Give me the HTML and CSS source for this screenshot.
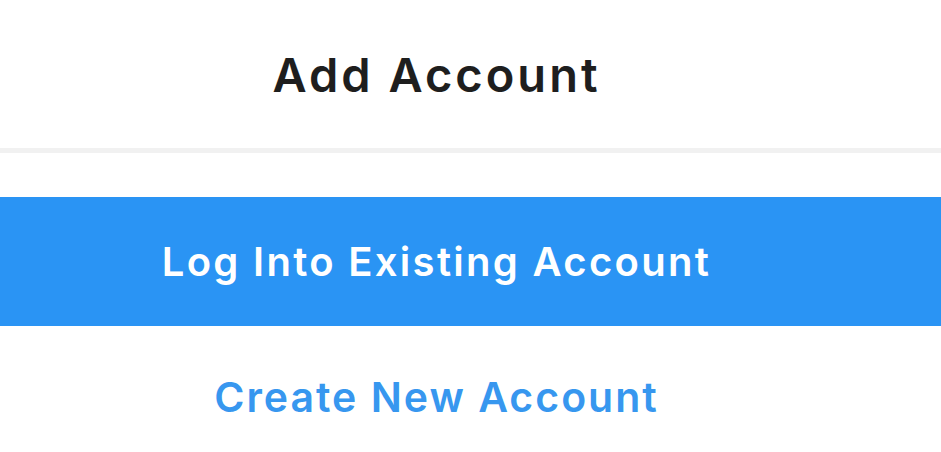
FILE: index.html
```html
<!DOCTYPE html>
<html>
<head>
<meta charset="utf-8">
<link rel="stylesheet" href="styles.css">
</head>
<body>
<div class="screen">
  <header class="title-bar">
    <h1 class="title">Add Account</h1>
  </header>
  <div class="divider"></div>
  <div class="actions">
    <button class="btn-primary">Log Into Existing Account</button>
    <button class="btn-link">Create New Account</button>
  </div>
</div>
</body>
</html>
```

FILE: styles.css
```css
html, body {
  margin: 0;
  padding: 0;
  background: #ffffff;
}
.screen {
  width: 941px;
  height: 452px;
  overflow: hidden;
  display: flex;
  flex-direction: column;
  font-family: "Inter", "Liberation Sans", Arial, sans-serif;
}
.title-bar {
  flex: 0 0 148px;
  display: flex;
  align-items: center;
  justify-content: center;
  padding-right: 68px;
}
.title {
  margin: 0;
  font-size: 47px;
  line-height: 1;
  font-weight: 600;
  color: #1e1e1e;
  letter-spacing: 3px;
}
.divider {
  flex: 0 0 5px;
  background: #f1f1f1;
}
.actions {
  flex: 0 0 auto;
  display: flex;
  flex-direction: column;
  padding-top: 44px;
}
.btn-primary {
  flex: 0 0 129px;
  border: 0;
  margin: 0;
  background: #2a94f4;
  color: #ffffff;
  font-family: inherit;
  font-size: 40px;
  line-height: 1;
  font-weight: 600;
  padding: 0 68px 0 0;
  letter-spacing: 2.3px;
}
.btn-link {
  flex: 0 0 142px;
  border: 0;
  margin: 0;
  background: transparent;
  color: #3797ef;
  font-family: inherit;
  font-size: 41px;
  line-height: 1;
  font-weight: 600;
  padding: 0 68px 0 0;
  letter-spacing: 2px;
}
```
